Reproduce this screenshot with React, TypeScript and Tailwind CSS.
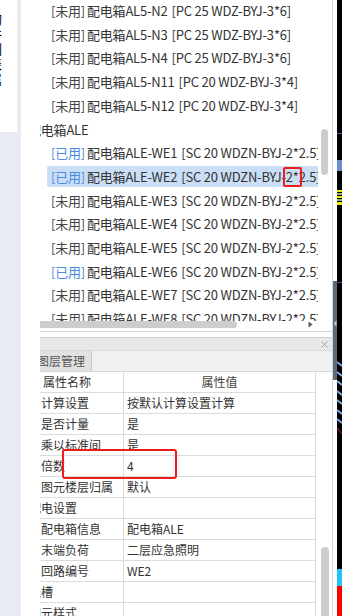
import React from 'react';

type ListRow =
  | { kind: 'group'; label: string }
  | { kind: 'item'; used: boolean; name: string; spec: string; selected?: boolean };

const pc6 = '[PC 25 WDZ-BYJ-3*6]';
const pc4 = '[PC 20 WDZ-BYJ-3*4]';
const sc = '[SC 20 WDZN-BYJ-2*2.5]';

const listRows: ListRow[] = [
  { kind: 'item', used: false, name: '配电箱AL5-N2', spec: pc6 },
  { kind: 'item', used: false, name: '配电箱AL5-N3', spec: pc6 },
  { kind: 'item', used: false, name: '配电箱AL5-N4', spec: pc6 },
  { kind: 'item', used: false, name: '配电箱AL5-N11', spec: pc4 },
  { kind: 'item', used: false, name: '配电箱AL5-N12', spec: pc4 },
  { kind: 'group', label: '配电箱ALE' },
  { kind: 'item', used: true, name: '配电箱ALE-WE1', spec: sc },
  { kind: 'item', used: true, name: '配电箱ALE-WE2', spec: sc, selected: true },
  { kind: 'item', used: false, name: '配电箱ALE-WE3', spec: sc },
  { kind: 'item', used: false, name: '配电箱ALE-WE4', spec: sc },
  { kind: 'item', used: false, name: '配电箱ALE-WE5', spec: sc },
  { kind: 'item', used: true, name: '配电箱ALE-WE6', spec: sc },
  { kind: 'item', used: false, name: '配电箱ALE-WE7', spec: sc },
  { kind: 'item', used: false, name: '配电箱ALE-WE8', spec: sc },
];

type PropRow = { name: string; value: string; group?: boolean };

const propRows: PropRow[] = [
  { name: '计算设置', value: '按默认计算设置计算' },
  { name: '是否计量', value: '是' },
  { name: '乘以标准间', value: '是' },
  { name: '倍数', value: '4' },
  { name: '图元楼层归属', value: '默认' },
  { name: '配电设置', value: '', group: true },
  { name: '配电箱信息', value: '配电箱ALE' },
  { name: '末端负荷', value: '二层应急照明' },
  { name: '回路编号', value: 'WE2' },
  { name: '线槽', value: '', group: true },
  { name: '图元样式', value: '', group: true },
];

function CadStrip() {
  // slice of the drawing canvas on the right edge
  return (
    <svg width="10" height="616" className="shrink-0">
      <rect x="0" y="0" width="1" height="616" fill="#d4d4d4" />
      <rect x="1" y="0" width="4" height="616" fill="#ffffff" />
      <rect x="1" y="281" width="4" height="99" fill="#5e6a76" />
      <path d="M4.5 320 L2 323.5 L4.5 327 Z" fill="#c9d1da" />
      <rect x="5" y="0" width="5" height="616" fill="#000000" />
      <rect x="5" y="133" width="5" height="1" fill="#5a5aa8" />
      <rect x="5" y="160" width="5" height="11" fill="#6d8fc9" />
      <rect x="5" y="190" width="5" height="2" fill="#e6f000" />
      <rect x="5" y="193" width="5" height="2" fill="#8fb080" />
      <rect x="5" y="196" width="5" height="2" fill="#e6f000" />
      <rect x="5" y="199" width="5" height="2" fill="#8fb080" />
      <rect x="5" y="202" width="5" height="3" fill="#e6f000" />
      <rect x="5" y="282" width="5" height="1" fill="#5050a0" />
      <path d="M5 362 L10 366 M5 372 L10 376 M5 381 L10 385 M5 391 L10 395 M5 400 L10 404 M5 410 L10 414 M5 419 L10 423" stroke="#7fa6e6" strokeWidth="2" />
      <path d="M5 428 L10 434" stroke="#c02020" strokeWidth="1" />
      <path d="M5 569 L10 569 L10 586 L5 586 Z" fill="#22c4f4" />
      <rect x="5" y="586" width="5" height="30" fill="#ff0000" />
    </svg>
  );
}

export default function App() {
  return (
    <div className="relative flex h-[616px] w-[342px] overflow-hidden bg-white font-['Noto_Sans_CJK_SC',sans-serif] text-[#333]">
      {/* left dock strip, its vertical tab label is scrolled almost out of view */}
      <div className="w-[21px] shrink-0 bg-[#e8ecf2]">
        <div className="h-[132px] w-[17px] overflow-hidden bg-white pt-[11px]">
          <div className="-ml-[11px] flex flex-col text-[13px] leading-[15px] text-black">
            {'构件列表属'.split('').map((c, i) => (
              <span key={i} className="h-[15px]">{c}</span>
            ))}
          </div>
        </div>
      </div>

      {/* main panel */}
      <div className="flex w-[311px] shrink-0 flex-col bg-white pl-[19px]">
        {/* circuit list */}
        <div className="flex h-[321px] shrink-0">
          <div className="w-[278px] overflow-hidden">
            <div className="-mt-[1px] flex flex-col">
              {listRows.map((row, i) => (
                <div key={i} className="flex h-[23.7px] shrink-0 items-center whitespace-nowrap text-[13px] tracking-[-0.2px]">
                  {row.kind === 'group' ? (
                    <div className="-ml-[12px]">{row.label}</div>
                  ) : (
                    <div
                      className={`ml-[7px] flex h-[21px] w-[300px] shrink-0 items-center rounded-[2px] pl-[4px] ${
                        row.selected ? 'bg-[#cadff6]' : ''
                      }`}
                    >
                      <span className={row.used ? 'text-[#4a8be3]' : 'text-[#444]'}>
                        {row.used ? '[已用]' : '[未用]'}
                      </span>
                      <span className="ml-[2px]">{row.name}</span>
                      <span className="ml-[4px]">{row.spec}</span>
                    </div>
                  )}
                </div>
              ))}
            </div>
          </div>
          <div className="w-[14px] pl-[3px] pt-[129px]">
            <div className="h-[46px] w-[7px] rounded-full bg-[#cdcdcd]" />
          </div>
        </div>
        {/* horizontal scrollbar */}
        <div className="flex h-[7px] shrink-0 items-center">
          <div className="h-[7px] w-[197px] rounded-r-full bg-[#cdcdcd]" />
          <div className="flex-1" />
          <svg width="5" height="7" className="mr-[19px]">
            <path d="M0.5 0.5 L4.5 3.5 L0.5 6.5 Z" fill="#555" />
          </svg>
        </div>
        <div className="h-[3px] shrink-0" />
        <div className="h-px shrink-0 bg-[#d6d6d6]" />
        <div className="h-[5px] shrink-0" />

        {/* dock title bar */}
        <div className="flex h-[13px] shrink-0 items-center justify-end border-t border-[#cfcfcf] bg-[#e7e7e7] pr-[4px]">
          <svg width="7" height="7">
            <path d="M0.5 0.5 L6.5 6.5 M6.5 0.5 L0.5 6.5" stroke="#a3a3a3" strokeWidth="1" />
          </svg>
        </div>
        {/* tabs */}
        <div className="flex h-[21px] shrink-0 border-t border-[#dadada] bg-[#f0f0f0]">
          <div className="flex w-[52px] items-center overflow-hidden border-r border-[#c9c9c9] bg-[#e2e2e2]">
            <span className="-ml-[3px] whitespace-nowrap text-[12px] text-[#555]">图层管理</span>
          </div>
        </div>

        {/* property table */}
        <div className="flex min-h-0 flex-1 border-t border-[#d6d6d6]">
          <div className="flex w-[275px] flex-col overflow-hidden text-[12px]">
            <div className="flex h-[21px] shrink-0 border-b border-[#dcdcdc]">
              <div className="flex w-[84px] items-center border-r border-[#dcdcdc] pl-[3px]">属性名称</div>
              <div className="flex flex-1 items-center justify-center text-[#444]">属性值</div>
            </div>
            {propRows.map((r, i) => (
              <div key={i} className="flex h-[21px] shrink-0 border-b border-[#dcdcdc]">
                <div className="flex w-[84px] shrink-0 items-center overflow-hidden whitespace-nowrap border-r border-[#dcdcdc] pl-[1px]">
                  <span className={r.group ? '-ml-[12px]' : ''}>{r.name}</span>
                </div>
                <div className="flex flex-1 items-center whitespace-nowrap pl-[3px]">{r.value}</div>
              </div>
            ))}
          </div>
          <div className="w-[17px] overflow-hidden border-l border-[#dcdcdc] pl-[5px] pt-[175px]">
            <div className="h-[80px] w-[8px] rounded-full bg-[#cdcdcd]" />
          </div>
        </div>
      </div>

      <CadStrip />

      {/* red annotation boxes */}
      <div className="pointer-events-none absolute left-[283px] top-[167px] h-[20px] w-[19px] rounded-[2px] border-2 border-[#f01c1c]" />
      <div className="pointer-events-none absolute left-[62px] top-[449px] h-[30px] w-[115px] rounded-[3px] border-2 border-[#f01c1c]" />
    </div>
  );
}
